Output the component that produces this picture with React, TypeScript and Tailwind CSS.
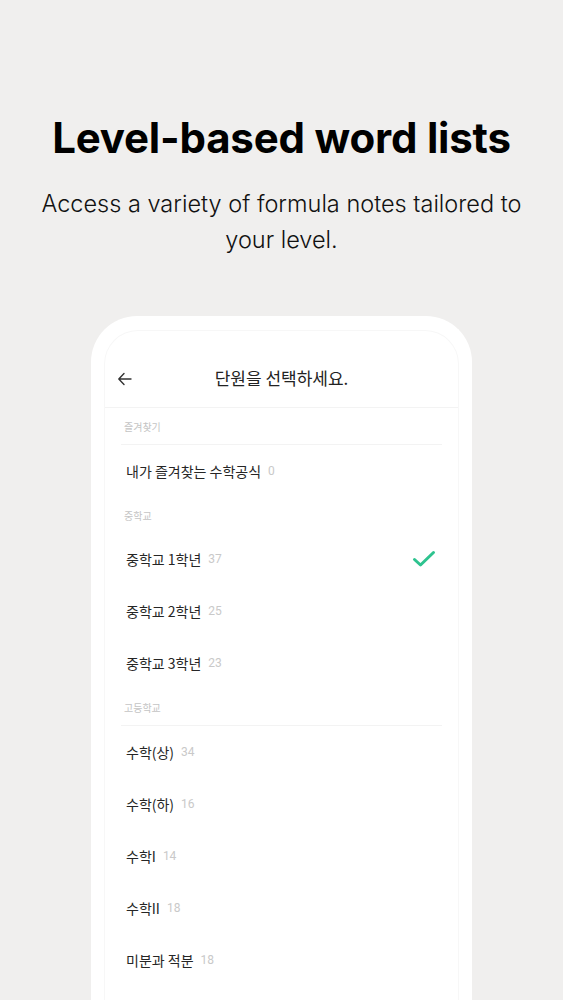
import React from "react";

const ko = { fontFamily: '"Noto Sans CJK KR", "Noto Sans", sans-serif' };

function Label({ text, divider = true }: { text: string; divider?: boolean }) {
  return (
    <div className="px-4">
      <div
        className={`pt-[12px] pb-[10px] px-[3px] text-[10px] leading-[14px] text-[#c4c4c4] ${divider ? "border-b border-[#f3f3f3]" : ""}`}
        style={ko}
      >
        {text}
      </div>
    </div>
  );
}

function Row({ name, count, checked = false }: { name: string; count: number; checked?: boolean }) {
  return (
    <div className="h-[52px] flex items-center pl-[21px] pr-[22px]">
      <span className="text-[14px] text-[#262626]" style={ko}>
        {name}
      </span>
      <span className="ml-[7px] text-[12px] text-[#c9c9c9]" style={{ fontFamily: "Roboto, sans-serif" }}>
        {count}
      </span>
      {checked && (
        <svg className="ml-auto" width="24" height="18" viewBox="0 0 24 18" fill="none">
          <path d="M2.5 9.5 L8.5 15 L21.5 2.5" stroke="#2ec38f" strokeWidth="3" strokeLinecap="round" strokeLinejoin="round" />
        </svg>
      )}
    </div>
  );
}

export default function App() {
  return (
    <div className="w-[563px] h-[1000px] overflow-hidden bg-[#f0efee] flex flex-col items-center">
      <h1
        className="mt-[113px] text-[42px] leading-[50px] font-bold text-black tracking-[-0.2px]"
        style={{ fontFamily: "Inter, sans-serif" }}
      >
        Level-based word lists
      </h1>
      <p
        className="mt-[23px] w-[520px] text-center text-[23.5px] leading-[36px] font-light text-[#111]"
        style={{ fontFamily: "Inter, sans-serif" }}
      >
        Access a variety of formula notes tailored to
        <br />
        your level.
      </p>
      <div className="mt-[58px] w-[381px] flex-1 bg-white rounded-t-[46px] border-[13px] border-b-0 border-white pt-[1px]">
        <div className="h-full bg-white rounded-t-[34px] border border-b-0 border-[#f7f7f7]">
          <div className="h-[77px] pt-[18px] flex items-center relative border-b border-[#f3f3f3]">
            <svg className="absolute left-[12px] top-[41px]" width="16" height="14" viewBox="0 0 16 14" fill="none">
              <path d="M14 7 H2 M7 1.5 L1.8 7 L7 12.5" stroke="#333" strokeWidth="1.4" strokeLinecap="round" strokeLinejoin="round" />
            </svg>
            <div className="w-full text-center text-[17px] text-[#222]" style={ko}>
              단원을 선택하세요.
            </div>
          </div>
          <Label text="즐겨찾기" />
          <Row name="내가 즐겨찾는 수학공식" count={0} />
          <Label text="중학교" divider={false} />
          <Row name="중학교 1학년" count={37} checked />
          <Row name="중학교 2학년" count={25} />
          <Row name="중학교 3학년" count={23} />
          <Label text="고등학교" />
          <Row name="수학(상)" count={34} />
          <Row name="수학(하)" count={16} />
          <Row name="수학I" count={14} />
          <Row name="수학II" count={18} />
          <Row name="미분과 적분" count={18} />
        </div>
      </div>
    </div>
  );
}
